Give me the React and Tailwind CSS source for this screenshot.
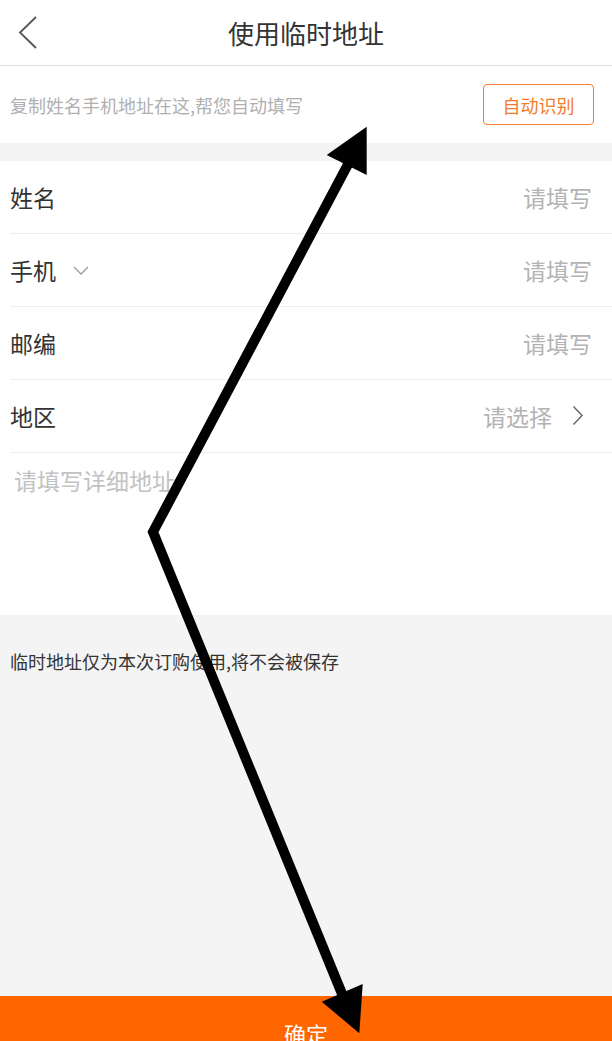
import React from "react";

const font = { fontFamily: '"Noto Sans CJK SC", "Noto Sans", sans-serif' };

function Row({ label, right, chevronDown, chevronRight }) {
  return (
    <div className="ml-[10px] h-[73px] border-b border-[#eeeeee] flex items-center justify-between">
      <div className="flex items-center">
        <span className="text-[23px] text-[#333333] leading-none">{label}</span>
        {chevronDown && (
          <svg width="18" height="10" viewBox="0 0 18 10" className="ml-[17px] mt-[1px]">
            <polyline points="1,1 8,8 15,1" fill="none" stroke="#9a9a9a" strokeWidth="1.3" />
          </svg>
        )}
      </div>
      <div className={`flex items-center ${chevronRight ? "pr-[28px]" : "pr-[20px]"}`}>
        <span className="text-[23px] text-[#b3b3b3] leading-none">{right}</span>
        {chevronRight && (
          <svg width="12" height="22" viewBox="0 0 12 22" className="ml-[20px]">
            <polyline points="1.5,1.5 10,10.5 1.5,19.5" fill="none" stroke="#666666" strokeWidth="1.5" />
          </svg>
        )}
      </div>
    </div>
  );
}

export default function App() {
  return (
    <div className="relative w-[612px] h-[1041px] overflow-hidden bg-[#f4f4f4] flex flex-col" style={font}>
      <header className="h-[66px] shrink-0 bg-white border-b border-[#dddddd] grid grid-cols-[1fr_auto_1fr] items-center">
        <div className="pl-[18px] flex items-center">
          <svg width="20" height="34" viewBox="0 0 20 34">
            <polyline points="18,1 2,16.5 18,32" fill="none" stroke="#555555" strokeWidth="1.8" />
          </svg>
        </div>
        <h1 className="text-[26px] text-[#333333] leading-none font-normal">使用临时地址</h1>
        <div />
      </header>

      <div className="h-[77px] shrink-0 bg-white flex items-center justify-between pl-[10px] pr-[18px]">
        <span className="text-[18px] text-[#b0b0b0] leading-none">复制姓名手机地址在这,帮您自动填写</span>
        <button className="w-[111px] h-[41px] border-[1.5px] border-[#f57a2c] rounded-[4px] text-[18px] text-[#f57a2c] leading-none flex items-center justify-center">
          自动识别
        </button>
      </div>

      <div className="h-[18px] shrink-0" />

      <div className="bg-white shrink-0">
        <Row label="姓名" right="请填写" />
        <Row label="手机" right="请填写" chevronDown />
        <Row label="邮编" right="请填写" />
        <Row label="地区" right="请选择" chevronRight />
        <div className="h-[162px] pl-[14px] pt-[12px]">
          <span className="text-[23px] leading-[30px] text-[#c2c2c2]">请填写详细地址</span>
        </div>
      </div>

      <div className="h-[381px] shrink-0 pl-[10px] pt-[34px]">
        <p className="text-[18px] leading-[24px] text-[#333333]">临时地址仅为本次订购使用,将不会被保存</p>
      </div>

      <button className="h-[74px] shrink-0 w-full bg-[#ff6600] text-white text-[22px] leading-none flex items-center justify-center">
        确定
      </button>

      <svg
        className="absolute left-0 top-0 pointer-events-none"
        width="612"
        height="1041"
        viewBox="0 0 612 1041"
      >
        <polyline
          points="354,153 153,532 347,1006"
          fill="none"
          stroke="#000000"
          strokeWidth="10"
          strokeLinejoin="miter"
          strokeMiterlimit="10"
        />
        <polygon points="366.7,126.7 326.7,155 366.7,175" fill="#000000" />
        <polygon points="359.3,1033.3 321.7,1001.7 362.7,984" fill="#000000" />
      </svg>
    </div>
  );
}
